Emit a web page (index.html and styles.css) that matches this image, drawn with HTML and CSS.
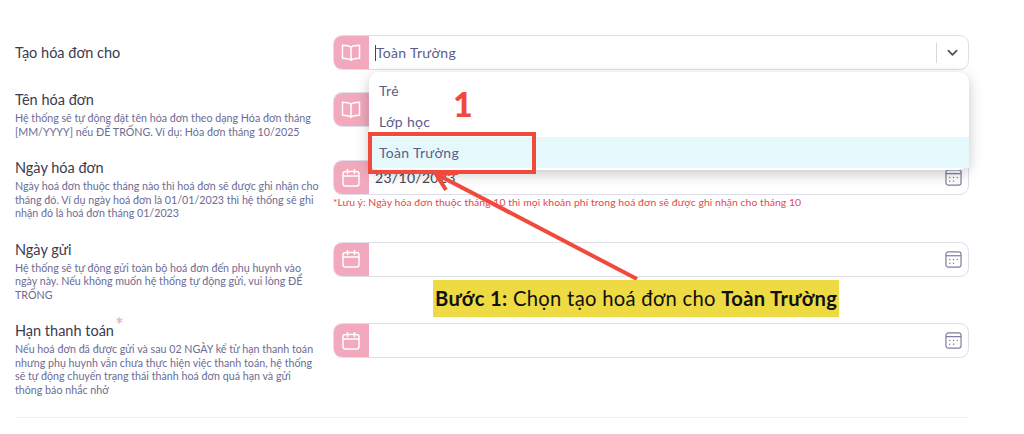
FILE: index.html
```html
<!DOCTYPE html>
<html lang="vi">
<head>
  <meta charset="UTF-8">
  <meta name="viewport" content="width=device-width, initial-scale=1">
  <title>Tạo hóa đơn</title>
  <link rel="stylesheet" href="styles.css">
</head>
<body>
  <svg class="icon-defs" width="0" height="0">
    <symbol id="book" viewBox="0 0 20 18">
      <path d="M10 3.2C8.4 1.8 6 1.2 1.5 1.2v13c4.5 0 6.9.6 8.5 2 1.600-1.400 4-2 8.500-2v-13C14 1.200 11.600 1.800 10 3.200zM10 3.200v13" fill="none" stroke="currentColor" stroke-width="1.500" stroke-linejoin="round"/>
    </symbol>
    <symbol id="cal" viewBox="0 0 18 18">
      <rect x="1" y="2.500" width="16" height="14.500" rx="2.500" fill="none" stroke="currentColor" stroke-width="1.500"/>
      <path d="M1 7h16M5.500 .5v4M12.500 .5v4" fill="none" stroke="currentColor" stroke-width="1.500" stroke-linecap="round"/>
    </symbol>
    <symbol id="cal-dots" viewBox="0 0 18 18">
      <rect x="1" y="1" width="16" height="16" rx="2.500" fill="none" stroke="currentColor" stroke-width="1.300"/>
      <path d="M1 5h16" fill="none" stroke="currentColor" stroke-width="1.300"/>
      <g fill="currentColor">
        <circle cx="5" cy="9" r=".8"/><circle cx="9" cy="9" r=".8"/><circle cx="13" cy="9" r=".8"/>
        <circle cx="5" cy="13" r=".8"/><circle cx="9" cy="13" r=".8"/>
      </g>
    </symbol>
  </svg>

  <div class="form">
    <div class="form-row">
      <div class="label-box center">
        <div class="label">Tạo hóa đơn cho</div>
      </div>
      <div class="field">
        <div class="input-box">
          <div class="addon"><svg class="icon-book"><use href="#book"/></svg></div>
          <div class="value has-caret">Toàn Trường</div>
          <div class="select-sep"></div>
          <svg class="chevron" viewBox="0 0 12 8"><path d="M1.500 1.500 6 6l4.500-4.500" fill="none" stroke="currentColor" stroke-width="2" stroke-linecap="round" stroke-linejoin="round"/></svg>
        </div>
        <div class="dropdown">
          <div class="dropdown-item">Trẻ</div>
          <div class="dropdown-item">Lớp học</div>
          <div class="dropdown-item active">Toàn Trường</div>
        </div>
      </div>
    </div>

    <div class="form-row">
      <div class="label-box">
        <div class="label">Tên hóa đơn</div>
        <div class="hint">Hệ thống sẽ tự động đặt tên hóa đơn theo dạng Hóa đơn tháng<br>[MM/YYYY] nếu ĐỂ TRỐNG. Ví dụ: Hóa đơn tháng 10/2025</div>
      </div>
      <div class="field">
        <div class="input-box">
          <div class="addon"><svg class="icon-book"><use href="#book"/></svg></div>
          <div class="value"></div>
        </div>
      </div>
    </div>

    <div class="form-row">
      <div class="label-box">
        <div class="label">Ngày hóa đơn</div>
        <div class="hint">Ngày hoá đơn thuộc tháng nào thì hoá đơn sẽ được ghi nhận cho<br>tháng đó. Ví dụ ngày hoá đơn là 01/01/2023 thì hệ thống sẽ ghi<br>nhận đó là hoá đơn tháng 01/2023</div>
      </div>
      <div class="field">
        <div class="input-box">
          <div class="addon"><svg class="icon-cal"><use href="#cal"/></svg></div>
          <div class="value dark">23/10/2023</div>
          <svg class="icon-picker"><use href="#cal-dots"/></svg>
        </div>
        <div class="note">*Lưu ý: Ngày hóa đơn thuộc tháng 10 thì mọi khoản phí trong hoá đơn sẽ được ghi nhận cho tháng 10</div>
      </div>
    </div>

    <div class="form-row">
      <div class="label-box">
        <div class="label">Ngày gửi</div>
        <div class="hint">Hệ thống sẽ tự động gửi toàn bộ hoá đơn đến phụ huynh vào<br>ngày này. Nếu không muốn hệ thống tự động gửi, vui lòng ĐỂ<br>TRỐNG</div>
      </div>
      <div class="field">
        <div class="input-box">
          <div class="addon"><svg class="icon-cal"><use href="#cal"/></svg></div>
          <div class="value"></div>
          <svg class="icon-picker"><use href="#cal-dots"/></svg>
        </div>
      </div>
    </div>

    <div class="form-row">
      <div class="label-box">
        <div class="label">Hạn thanh toán<span class="required">*</span></div>
        <div class="hint">Nếu hoá đơn đã được gửi và sau 02 NGÀY kể từ hạn thanh toán<br>nhưng phụ huynh vẫn chưa thực hiện việc thanh toán, hệ thống<br>sẽ tự động chuyển trạng thái thành hoá đơn quá hạn và gửi<br>thông báo nhắc nhở</div>
      </div>
      <div class="field">
        <div class="input-box">
          <div class="addon"><svg class="icon-cal"><use href="#cal"/></svg></div>
          <div class="value"></div>
          <svg class="icon-picker"><use href="#cal-dots"/></svg>
        </div>
      </div>
    </div>

    <div class="divider"></div>
  </div>

  <!-- chu thich do ve de len form -->
  <div class="red-box"></div>
  <div class="step-number">1</div>
  <svg class="arrow" width="1024" height="434" viewBox="0 0 1024 434">
    <path d="M637 279 438 175" fill="none" stroke="#ef4a3c" stroke-width="4"/>
    <path d="M458 173 436 174 446 190" fill="none" stroke="#ef4a3c" stroke-width="4"/>
  </svg>
  <div class="caption"><b>Bước 1:</b> Chọn tạo hoá đơn cho <b>Toàn Trường</b></div>
</body>
</html>
```

FILE: styles.css
```css
* {
  box-sizing: border-box;
}

body {
  margin: 0;
  background-color: white;
  font-family: Lato, "Noto Sans", sans-serif;
  color: #33334d;
  height: 434px;
  overflow: hidden;
  position: relative;
}

.icon-defs {
  position: absolute;
}

.form {
  padding: 35px 55px 0 15px;
}

.form-row {
  display: grid;
  grid-template-columns: 318px 636px;
  padding-bottom: 22px;
}

.label-box.center {
  align-self: center;
}

.label {
  font-size: 14.5px;
  line-height: 16px;
  color: #3a3a50;
  margin-bottom: 3px;
}

.label-box.center .label {
  margin-bottom: 0;
}

.required {
  color: #f2a9bd;
  font-size: 21px;
  line-height: 10px;
  position: relative;
  top: -3px;
  margin-left: 1px;
}

.hint {
  font-size: 10.7px;
  line-height: 13.5px;
  color: #6c6c94;
}

.field {
  position: relative;
}

.input-box {
  height: 35px;
  display: flex;
  align-items: center;
  background-color: white;
  border: 1.5px solid #dfdfea;
  border-radius: 9px;
  overflow: hidden;
}

.addon {
  width: 36px;
  align-self: stretch;
  flex: none;
  margin-left: -1px;
  background-color: #f2a9bd;
  color: white;
  display: flex;
  align-items: center;
  justify-content: center;
}

.icon-book {
  width: 20px;
  height: 18px;
}

.icon-cal {
  width: 18px;
  height: 18px;
}

.icon-picker {
  width: 17px;
  height: 17px;
  flex: none;
  margin-right: 6px;
  color: #7f7fa6;
}

.value {
  flex: 1;
  padding-left: 6px;
  font-size: 14px;
  color: #5c5c88;
  letter-spacing: 0.3px;
}

.value.dark {
  color: #44445a;
}

.has-caret {
  border-left: 1px solid #44445a;
  margin-left: 6px;
  padding-left: 0;
  line-height: 16px;
}

.select-sep {
  width: 1px;
  height: 20px;
  background-color: #d8d8d8;
  flex: none;
}

.chevron {
  width: 11px;
  height: 8px;
  flex: none;
  margin: 0 10px;
  color: #555;
}

.note {
  font-size: 10.4px;
  letter-spacing: 0.06px;
  line-height: 13px;
  margin-top: 1px;
  color: #e2474b;
}

.dropdown {
  position: absolute;
  top: 37px;
  left: 36px;
  right: 0;
  padding-top: 3px;
  padding-bottom: 2px;
  background-color: white;
  border-radius: 10px;
  box-shadow: 0 4px 14px rgba(0, 0, 0, 0.22);
  z-index: 2;
}

.dropdown-item {
  height: 31px;
  padding-left: 10px;
  display: flex;
  align-items: center;
  font-size: 14px;
  letter-spacing: 0.3px;
  color: #5c5c88;
}

.dropdown-item.active {
  background-color: #e5f9fd;
}

.divider {
  height: 1px;
  width: 954px;
  margin-top: -1px;
  background-color: #eeeef5;
}

.red-box {
  position: absolute;
  left: 368px;
  top: 132px;
  width: 168px;
  height: 42px;
  border: 4px solid #ef4a3c;
  z-index: 3;
}

.step-number {
  position: absolute;
  left: 453px;
  top: 84px;
  font-size: 34px;
  line-height: 40px;
  font-weight: 900;
  color: #ef4a3c;
  z-index: 3;
}

.arrow {
  position: absolute;
  left: 0;
  top: 0;
  z-index: 3;
}

.caption {
  position: absolute;
  left: 433px;
  top: 280px;
  width: 406px;
  height: 37px;
  line-height: 37px;
  padding-left: 2px;
  background-color: #eeda43;
  font-size: 20.200px;
  color: #111;
  letter-spacing: 0.3px;
  white-space: nowrap;
  z-index: 3;
}
```
